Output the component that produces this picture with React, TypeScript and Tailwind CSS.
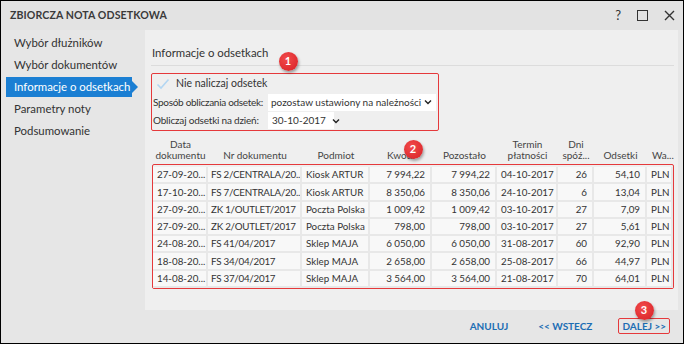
import React from "react";

const font = { fontFamily: 'Lato, "Noto Sans", sans-serif' };

const cols = [
  { w: 55, label: ["Data", "dokumentu"], align: "left" },
  { w: 94, label: ["Nr dokumentu"], align: "left" },
  { w: 68, label: ["Podmiot"], align: "left" },
  { w: 62, label: ["Kwota"], align: "right" },
  { w: 65, label: ["Pozostało"], align: "right" },
  { w: 61, label: ["Termin", "płatności"], align: "left" },
  { w: 36, label: ["Dni", "spóź..."], align: "right" },
  { w: 53, label: ["Odsetki"], align: "right" },
  { w: 26, label: ["Wa..."], align: "left" },
];

const rows = [
  ["27-09-20...", "FS 2/CENTRALA/20...", "Kiosk ARTUR", "7 994,22", "7 994,22", "04-10-2017", "26", "54,10", "PLN"],
  ["17-10-20...", "FS 7/CENTRALA/20...", "Kiosk ARTUR", "8 350,06", "8 350,06", "24-10-2017", "6", "13,04", "PLN"],
  ["27-09-20...", "ZK 1/OUTLET/2017", "Poczta Polska", "1 009,42", "1 009,42", "03-10-2017", "27", "7,09", "PLN"],
  ["27-09-20...", "ZK 2/OUTLET/2017", "Poczta Polska", "798,00", "798,00", "03-10-2017", "27", "5,61", "PLN"],
  ["24-08-20...", "FS 41/04/2017", "Sklep MAJA", "6 050,00", "6 050,00", "31-08-2017", "60", "92,90", "PLN"],
  ["18-08-20...", "FS 34/04/2017", "Sklep MAJA", "2 658,00", "2 658,00", "25-08-2017", "66", "44,97", "PLN"],
  ["14-08-20...", "FS 37/04/2017", "Sklep MAJA", "3 564,00", "3 564,00", "21-08-2017", "70", "64,01", "PLN"],
];

function Chevron() {
  return (
    <svg width="8" height="6" viewBox="0 0 8 6" className="shrink-0">
      <path d="M1 1.5 L4 4.5 L7 1.5" fill="none" stroke="#222" strokeWidth="1.4" />
    </svg>
  );
}

function Badge({ n, x, y }: { n: string; x: number; y: number }) {
  return (
    <div
      className="absolute w-[19px] h-[19px] rounded-full bg-[radial-gradient(circle_at_40%_35%,#f24b4b,#d71f25)] text-white text-[11px] font-bold flex items-center justify-center shadow-[1px_2px_3px_rgba(0,0,0,0.35)]"
      style={{ left: x - 9.5, top: y - 9.5 }}
    >
      {n}
    </div>
  );
}

export default function App() {
  return (
    <div
      className="relative w-[684px] h-[344px] border border-black bg-[#e6e6e6] flex flex-col text-[#333] overflow-hidden whitespace-nowrap"
      style={font}
    >
      {/* title bar */}
      <div className="h-[29px] bg-[#e3e3e3] flex items-center justify-between pl-[9px] pr-[8px] shrink-0">
        <div className="text-[10.6px] font-bold text-[#3a3a3a] tracking-[0.1px]">ZBIORCZA NOTA ODSETKOWA</div>
        <div className="flex items-center gap-[16px] text-[#333]">
          <span className="text-[13px] leading-none">?</span>
          <span className="w-[11px] h-[11px] border-[1.5px] border-[#333]" />
          <svg width="11" height="11" viewBox="0 0 11 11">
            <path d="M1 1 L10 10 M10 1 L1 10" stroke="#333" strokeWidth="1.4" />
          </svg>
        </div>
      </div>

      <div className="flex h-[280px] shrink-0">
        {/* nav */}
        <div className="w-[144px] pt-[2px] flex flex-col text-[11.4px] shrink-0">
          {["Wybór dłużników", "Wybór dokumentów", "Informacje o odsetkach", "Parametry noty", "Podsumowanie"].map((t, i) =>
            i === 2 ? (
              <div key={t} className="h-[22px] flex items-center pl-[5px]">
                <div className="relative h-[20px] w-[126px] bg-[#1b7fd3] text-white flex items-center pl-[8px]">
                  {t}
                  <div className="absolute right-[-6px] top-[4px] w-0 h-0 border-y-[6px] border-y-transparent border-l-[6px] border-l-[#1b7fd3]" />
                </div>
              </div>
            ) : (
              <div key={t} className="h-[22px] flex items-center pl-[13px]">
                {t}
              </div>
            )
          )}
        </div>

        {/* panel */}
        <div className="w-[533px] bg-[#efefef] pl-[6px] pr-[4px] flex flex-col">
          <div className="pt-[14px] text-[11.4px] text-[#333] leading-[18px] pl-[1px]">Informacje o odsetkach</div>
          <div className="mt-[3px] h-[1px] bg-[#dcdcdc] mr-[0px]" />

          <div className="mt-[7px] w-[288px] h-[58px] border border-[#e5393b] rounded-[2px] flex flex-col text-[10px] pl-[1px]">
            <div className="h-[19px] flex items-center gap-[6px] pl-[3px] pt-[2px]">
              <svg width="14" height="12" viewBox="0 0 14 12">
                <path d="M1.5 6.5 L5 10 L12.5 1.5" fill="none" stroke="#b3d6f2" strokeWidth="1.6" />
              </svg>
              <span className="text-[10.5px]">Nie naliczaj odsetek</span>
            </div>
            <div className="h-[19px] flex items-center">
              <span className="w-[115px] shrink-0 tracking-[-0.3px]">Sposób obliczania odsetek:</span>
              <div className="w-[168px] shrink-0 h-[17px] bg-white flex items-center justify-between pl-[3px] pr-[4px]">
                <span>pozostaw ustawiony na należności</span>
                <Chevron />
              </div>
            </div>
            <div className="h-[19px] flex items-center">
              <span className="w-[115px] shrink-0 tracking-[-0.2px]">Obliczaj odsetki na dzień:</span>
              <div className="w-[66px] shrink-0 min-w-0 h-[17px] bg-white flex items-center gap-[6px] pl-[4px]">
                <span>30-10-2017</span>
                <Chevron />
              </div>
            </div>
          </div>

          {/* table header */}
          <div className="mt-[8px] h-[25px] flex items-end pl-[2px] text-[10px] leading-[11px] text-[#444]">
            {cols.map((c, i) => (
              <div
                key={i}
                className={`shrink-0 flex flex-col pb-[3px] ${i === 8 ? "items-start pl-[5px]" : "items-center"}`}
                style={{ width: c.w }}
              >
                {c.label.map((l) => (
                  <span key={l}>{l}</span>
                ))}
              </div>
            ))}
          </div>

          {/* table body */}
          <div className="ml-[1px] w-[522px] h-[125px] border border-[#e5393b] rounded-[2px] pt-[2px] text-[9.8px]">
            {rows.map((r, ri) => (
              <div key={ri} className="flex h-[17.3px]">
                {r.map((v, ci) => (
                  <div
                    key={ci}
                    className={`shrink-0 bg-[#f8f8f8] border-r-2 border-b-2 border-[#e8e8e8] flex items-center overflow-hidden ${
                      cols[ci].align === "right" ? "justify-end pr-[5px]" : ci === 1 ? "pl-[3px] tracking-[-0.25px]" : "pl-[4px]"
                    }`}
                    style={{ width: cols[ci].w }}
                  >
                    {v}
                  </div>
                ))}
              </div>
            ))}
          </div>
        </div>
      </div>

      {/* footer */}
      <div className="flex-1 flex items-center justify-end pr-[13px] pb-[1px] text-[10px] font-bold text-[#1c6db4]">
        <span className="mr-[30px]">ANULUJ</span>
        <span className="mr-[26px]">&lt;&lt; WSTECZ</span>
        <span className="border border-[#e5393b] rounded-[2px] px-[3px] h-[16px] flex items-center">DALEJ &gt;&gt;</span>
      </div>

      <Badge n="1" x={287} y={60} />
      <Badge n="2" x={412} y={148} />
      <Badge n="3" x={643} y={309} />
    </div>
  );
}
